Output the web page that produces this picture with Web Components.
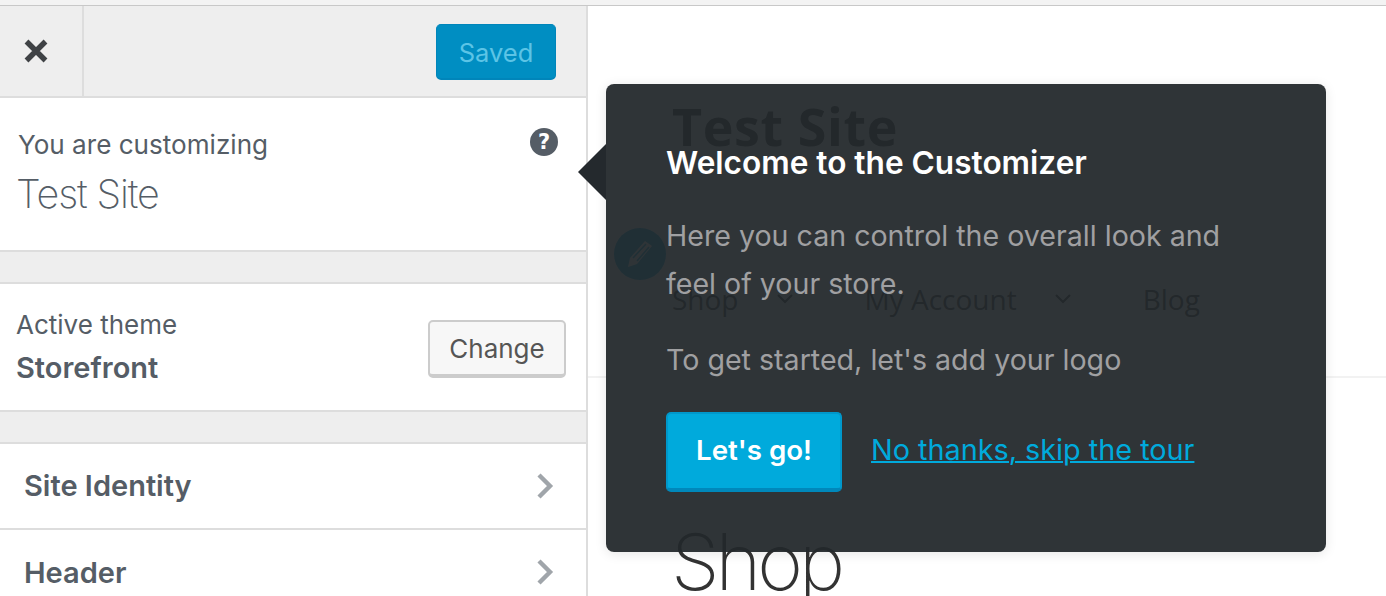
<!DOCTYPE html>
<html lang="en">
<head>
<meta charset="utf-8">
<title>Customizer</title>
<style>
  html, body { margin: 0; height: 100%; overflow: hidden; background: #fff; }
</style>
</head>
<body>
<cz-app>
  <cz-sidebar slot="sidebar">
    <cz-topbar slot="top">Saved</cz-topbar>
    <cz-info>Test Site</cz-info>
    <cz-theme>Storefront</cz-theme>
    <cz-nav-row>Site Identity</cz-nav-row>
    <cz-nav-row>Header</cz-nav-row>
  </cz-sidebar>
  <cz-preview slot="preview"></cz-preview>
  <cz-tour slot="tour" heading="Welcome to the Customizer">
    <p>Here you can control the overall look and feel of your store.</p>
    <p>To get started, let's add your logo</p>
  </cz-tour>
</cz-app>

<script>
/*
 * Small helper, every element has its markup and styles in a shadow root.
 */
const define = (name, html) => {
  const template = document.createElement('template')
  template.innerHTML = html
  customElements.define(name, class extends HTMLElement {
    constructor () {
      super()
      this.attachShadow({ mode: 'open' }).append(template.content.cloneNode(true))
      const heading = this.shadowRoot.querySelector('[data-heading]')
      if (heading) heading.textContent = this.getAttribute('heading')
    }
  })
}

define('cz-app', `
  <style>
    :host {
      display: flex;
      flex-direction: column;
      position: relative;
      height: 596px;
      overflow: hidden;
      font-family: Inter, "Liberation Sans", sans-serif;
    }
    .strip {
      flex: none;
      height: 5px;
      background: #f3f3f3;
      border-bottom: 1px solid #c8c8c8;
    }
    .main {
      flex: 1;
      display: flex;
      min-height: 0;
    }
  </style>
  <div class="strip"></div>
  <div class="main">
    <slot name="sidebar"></slot>
    <slot name="preview"></slot>
  </div>
  <slot name="tour"></slot>
`)

define('cz-sidebar', `
  <style>
    :host {
      display: block;
      flex: none;
      width: 586px;
      height: 100%;
      overflow: hidden;
      background: #eee;
      border-right: 2px solid #ddd;
    }
  </style>
  <slot name="top"></slot>
  <slot></slot>
`)

define('cz-topbar', `
  <style>
    :host {
      display: flex;
      align-items: center;
      justify-content: space-between;
      height: 90px;
      background: #eee;
      border-bottom: 2px solid #ddd;
    }
    .close {
      display: flex;
      align-items: center;
      box-sizing: border-box;
      width: 84px;
      height: 100%;
      padding-left: 23px;
      border-right: 2px solid #ddd;
    }
    .save {
      display: flex;
      align-items: center;
      justify-content: center;
      box-sizing: border-box;
      width: 120px;
      height: 56px;
      margin: 2px 30px 0 0;
      padding-top: 2px;
      border: 1px solid #0085ba;
      border-bottom-width: 2px;
      border-radius: 5px;
      background: #008ec2;
      color: #5cc4e6;
      font-size: 25.5px;
    }
  </style>
  <div class="close">
    <svg width="26" height="26" viewBox="0 0 26 26" aria-hidden="true">
      <path d="M3.5 3.5 L22.5 22.5 M22.5 3.5 L3.5 22.5" stroke="#3f4245" stroke-width="5.4" fill="none"/>
    </svg>
  </div>
  <div class="save"><slot></slot></div>
`)

define('cz-info', `
  <style>
    :host {
      display: block;
      box-sizing: border-box;
      position: relative;
      height: 154px;
      padding: 30px 18px 0;
      background: #fff;
      border-bottom: 2px solid #ddd;
      color: #555d66;
    }
    .label { font-size: 26.1px; line-height: 34px; }
    .title {
      margin: 9px 0 0 -2px;
      font-size: 39.5px;
      line-height: 46px;
      font-weight: 200;
      letter-spacing: -1.1px;
    }
    .help {
      position: absolute;
      top: 30px;
      right: 28px;
      width: 28px;
      height: 28px;
      border-radius: 50%;
      background: #555d66;
      color: #fff;
      font: bold 21px/28px "DejaVu Sans", sans-serif;
      text-align: center;
    }
  </style>
  <div class="label">You are customizing</div>
  <div class="title"><slot></slot></div>
  <span class="help">?</span>
`)

define('cz-theme', `
  <style>
    :host {
      display: flex;
      align-items: center;
      justify-content: space-between;
      box-sizing: border-box;
      height: 130px;
      margin: 30px 0;
      padding: 0 20px 0 16px;
      background: #fff;
      border-top: 2px solid #ddd;
      border-bottom: 2px solid #ddd;
      color: #555d66;
    }
    .label { font-size: 26px; line-height: 34px; margin-top: -1px; }
    .name { margin-top: 9px; font-size: 29px; line-height: 34px; font-weight: 600; }
    .change {
      display: flex;
      align-items: center;
      justify-content: center;
      box-sizing: border-box;
      width: 138px;
      height: 58px;
      margin-top: 4px;
      border: 2px solid #ccc;
      border-bottom-width: 4px;
      border-radius: 5px;
      background: #f7f7f7;
      color: #555;
      font-size: 26px;
    }
  </style>
  <div>
    <div class="label">Active theme</div>
    <div class="name"><slot></slot></div>
  </div>
  <div class="change">Change</div>
`)

define('cz-nav-row', `
  <style>
    :host {
      display: flex;
      align-items: center;
      justify-content: space-between;
      box-sizing: border-box;
      height: 86px;
      padding: 0 32px 0 24px;
      background: #fff;
      border-top: 2px solid #ddd;
      color: #555d66;
      font-size: 29px;
      font-weight: 600;
    }
    :host(:last-child) { height: 84px; padding-top: 2px; }
    .text { margin-bottom: 2px; }
    :host(:last-child) .text { margin-bottom: 0; }
    svg { flex: none; }
  </style>
  <span class="text"><slot></slot></span>
  <svg width="18" height="28" viewBox="0 0 18 28" aria-hidden="true">
    <path d="M3 3 L14 14 L3 25" stroke="#a0a5aa" stroke-width="4.4" fill="none"/>
  </svg>
`)

define('cz-preview', `
  <style>
    :host {
      display: block;
      flex: 1;
      min-width: 0;
      background: #fff;
      color: #333;
    }
    header {
      height: 372px;
      box-sizing: border-box;
      padding: 86px 0 0 84px;
      border-bottom: 2px solid #f2f2f2;
      font-family: "Open Sans", sans-serif;
    }
    .brand { font-size: 52px; line-height: 68px; font-weight: 700; letter-spacing: 0.6px; }
    .edit {
      display: flex;
      align-items: center;
      justify-content: center;
      width: 52px;
      height: 52px;
      margin: 68px 0 0 -58px;
      border-radius: 50%;
      background: #00aadc;
    }
    nav {
      display: flex;
      align-items: center;
      height: 44px;
      margin-top: -3px;
      font-size: 28px;
      color: #333;
    }
    nav span { display: inline-flex; align-items: center; gap: 37px; margin-right: 71px; }
    h1 {
      margin: 139px 0 0 83px;
      font: 150 78px/90px Inter, sans-serif;
      letter-spacing: -4px;
    }
  </style>
  <header>
    <div class="brand">Test Site</div>
    <div class="edit">
      <svg width="26" height="28" viewBox="0 0 26 28" aria-hidden="true">
        <path d="M18 1 L25 6 L10 24 L1 27 L3 18 Z" fill="#fff"/>
        <path d="M6 18 L19 4 M10 21 L22 7" stroke="#00aadc" stroke-width="1.6" fill="none"/>
      </svg>
    </div>
    <nav>
      <span>Shop
        <svg width="18" height="12" viewBox="0 0 18 12"><path d="M2 2 L9 9 L16 2" stroke="#333" stroke-width="2" fill="none"/></svg>
      </span>
      <span>My Account
        <svg width="18" height="12" viewBox="0 0 18 12"><path d="M2 2 L9 9 L16 2" stroke="#333" stroke-width="2" fill="none"/></svg>
      </span>
      <span>Blog</span>
    </nav>
  </header>
  <h1>Shop</h1>
`)

define('cz-tour', `
  <style>
    :host {
      display: block;
      box-sizing: border-box;
      position: absolute;
      top: 84px;
      left: 606px;
      width: 720px;
      height: 468px;
      padding: 59px 60px;
      border-radius: 8px;
      background: rgba(34, 39, 42, 0.94);
      box-shadow: 0 2px 12px rgba(0, 0, 0, 0.1);
      color: #a0a0a2;
      font-size: 28.6px;
      line-height: 48px;
    }
    :host::before {
      content: "";
      position: absolute;
      top: 60px;
      left: -28px;
      border-style: solid;
      border-width: 28px 28px 28px 0;
      border-color: transparent #24292d transparent transparent;
    }
    h2 {
      margin: 0 0 29px;
      color: #fff;
      font-size: 31.6px;
      line-height: 40px;
      font-weight: 600;
    }
    ::slotted(p) { margin: 0 0 28px; max-width: 570px; }
    .actions {
      display: flex;
      align-items: center;
      gap: 29px;
      margin-top: 28px;
    }
    .go {
      display: flex;
      align-items: center;
      justify-content: center;
      box-sizing: border-box;
      width: 176px;
      height: 80px;
      padding-bottom: 2px;
      border: 2px solid #0098cb;
      border-bottom: 4px solid #0088bb;
      border-radius: 5px;
      background: #00aadc;
      color: #fff;
      font-weight: 600;
      font-size: 27.7px;
    }
    a {
      margin-top: -4px;
      color: #00aadc;
      text-decoration: underline;
      text-decoration-thickness: 2px;
      font-size: 28.8px;
    }
  </style>
  <h2 data-heading></h2>
  <slot></slot>
  <div class="actions">
    <div class="go">Let's go!</div>
    <a href="#">No thanks, skip the tour</a>
  </div>
`)
</script>
</body>
</html>
